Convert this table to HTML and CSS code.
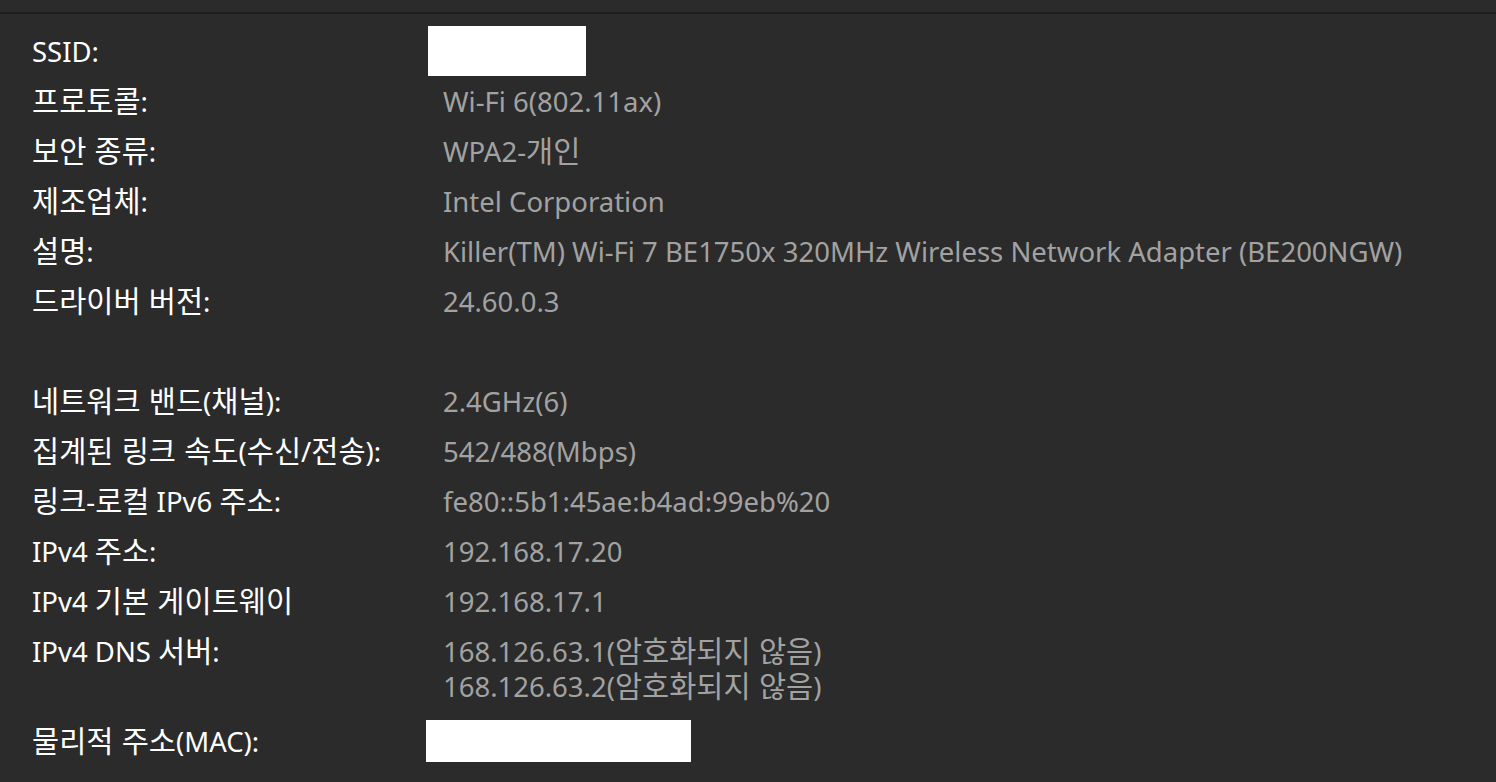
FILE: index.html
```html
<!DOCTYPE html>
<html lang="ko">
<head>
<meta charset="utf-8">
<link rel="stylesheet" href="styles.css">
</head>
<body>
<div class="topbar"></div>
<div class="props">
  <div class="row"><div class="label">SSID:</div><div class="value"><div class="mask mask-ssid"></div></div></div>
  <div class="row"><div class="label"><span class="ko">프로토콜</span>:</div><div class="value">Wi-Fi 6(802.11ax)</div></div>
  <div class="row"><div class="label"><span class="ko">보안 종류</span>:</div><div class="value">WPA2-<span class="ko">개인</span></div></div>
  <div class="row"><div class="label"><span class="ko">제조업체</span>:</div><div class="value">Intel Corporation</div></div>
  <div class="row"><div class="label"><span class="ko">설명</span>:</div><div class="value">Killer(TM) Wi-Fi 7 BE1750x 320MHz Wireless Network Adapter (BE200NGW)</div></div>
  <div class="row"><div class="label"><span class="ko">드라이버 버전</span>:</div><div class="value">24.60.0.3</div></div>
  <div class="row spacer"></div>
  <div class="row"><div class="label"><span class="ko">네트워크 밴드</span>(<span class="ko">채널</span>):</div><div class="value">2.4GHz(6)</div></div>
  <div class="row"><div class="label"><span class="ko">집계된 링크 속도</span>(<span class="ko">수신</span>/<span class="ko">전송</span>):</div><div class="value">542/488(Mbps)</div></div>
  <div class="row"><div class="label"><span class="ko">링크</span>-<span class="ko">로컬</span> IPv6 <span class="ko">주소</span>:</div><div class="value">fe80::5b1:45ae:b4ad:99eb%20</div></div>
  <div class="row"><div class="label">IPv4 <span class="ko">주소</span>:</div><div class="value">192.168.17.20</div></div>
  <div class="row"><div class="label">IPv4 <span class="ko">기본 게이트웨이</span></div><div class="value">192.168.17.1</div></div>
  <div class="row"><div class="label">IPv4 DNS <span class="ko">서버</span>:</div><div class="value"><div class="line">168.126.63.1(<span class="ko">암호화되지 않음</span>)</div><div class="line">168.126.63.2(<span class="ko">암호화되지 않음</span>)</div></div></div>
  <div class="row row-mac"><div class="label"><span class="ko">물리적 주소</span>(MAC):</div><div class="value"><div class="mask mask-mac"></div></div></div>
</div>
</body>
</html>
```

FILE: styles.css
```css
html, body {
  margin: 0;
  padding: 0;
  background: #2b2b2b;
  height: 100%;
  overflow: hidden;
}
body {
  font-family: "Noto Sans", "Noto Sans CJK KR", sans-serif;
  font-size: 27.5px;
}
.topbar {
  height: 12px;
  border-bottom: 2px solid #1d1d1d;
  background: #2b2b2b;
}
.props {
  padding: 12px 0 0 32px;
}
.row {
  display: grid;
  grid-template-columns: 411px 1fr;
  align-items: start;
  padding: 7.5px 0;
  line-height: 35px;
}
.label,
.value,
.line {
  height: 35px;
}
.value:has(.line) {
  height: auto;
}
.label {
  color: #ffffff;
  white-space: nowrap;
}
.value {
  color: #a2a2a2;
  white-space: nowrap;
}
.ko {
  font-family: "Noto Sans CJK KR", sans-serif;
  font-size: 29.5px;
  line-height: 1;
}
.spacer {
  height: 35px;
}
.row:first-child {
  padding: 0;
  height: 50px;
  align-items: center;
}
.row-mac {
  padding: 0;
  margin-top: 9px;
  height: 42px;
  align-items: center;
}
.row:first-child .value,
.row-mac .value {
  height: auto;
}
.mask {
  background: #ffffff;
}
.mask-ssid {
  margin-left: -15px;
  width: 158px;
  height: 50px;
}
.mask-mac {
  margin-left: -17px;
  width: 265px;
  height: 42px;
}
```
